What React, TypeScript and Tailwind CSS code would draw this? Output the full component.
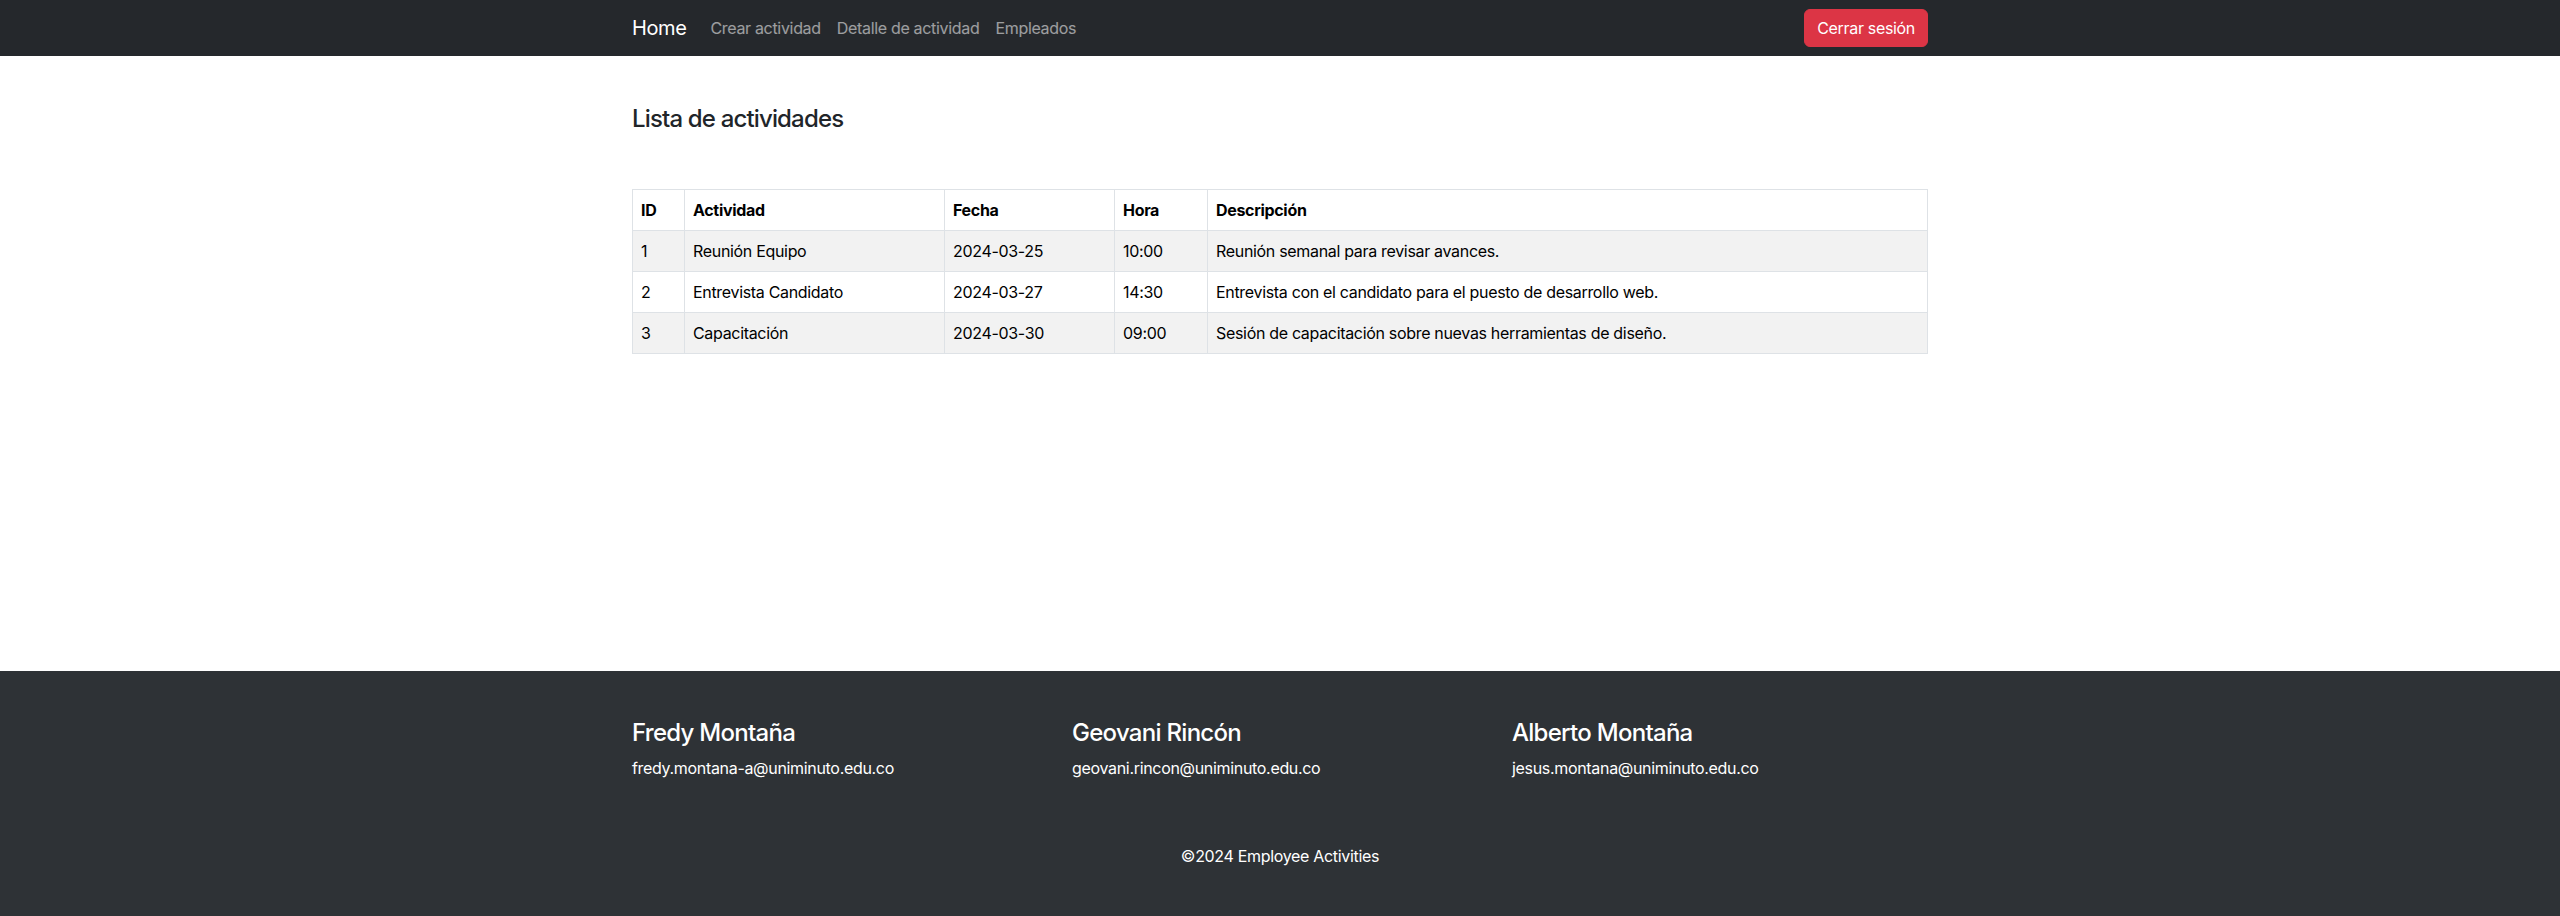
import * as React from 'react';

interface Activity {
  id: number;
  name: string;
  date: string;
  time: string;
  description: string;
}

const activities: Activity[] = [
  { id: 1, name: 'Reunión Equipo', date: '2024-03-25', time: '10:00', description: 'Reunión semanal para revisar avances.' },
  { id: 2, name: 'Entrevista Candidato', date: '2024-03-27', time: '14:30', description: 'Entrevista con el candidato para el puesto de desarrollo web.' },
  { id: 3, name: 'Capacitación', date: '2024-03-30', time: '09:00', description: 'Sesión de capacitación sobre nuevas herramientas de diseño.' },
];

const authors = [
  { name: 'Fredy Montaña', email: 'fredy.montana-a@uniminuto.edu.co' },
  { name: 'Geovani Rincón', email: 'geovani.rincon@uniminuto.edu.co' },
  { name: 'Alberto Montaña', email: 'jesus.montana@uniminuto.edu.co' },
];

function Navbar() {
  return (
    <nav className="bg-[#25282c] py-2">
      <div className="w-[1296px] mx-auto flex items-center justify-between">
        <div className="flex items-center">
          <a href="#" className="text-[20px] leading-[30px] py-[5px] mr-4 text-white tracking-[-0.02em]">
            Home
          </a>
          <ul className="flex items-center">
            {['Crear actividad', 'Detalle de actividad', 'Empleados'].map((l) => (
              <li key={l}>
                <a href="#" className="block px-2 py-2 text-base leading-6 text-white/55">
                  {l}
                </a>
              </li>
            ))}
          </ul>
        </div>
        <button className="bg-[#dc3545] border border-[#dc3545] text-white text-base leading-6 px-3 py-[6px] rounded-[6px]">
          Cerrar sesión
        </button>
      </div>
    </nav>
  );
}

function ActivityTable() {
  const cell = 'border border-[#dee2e6] p-2 text-left align-top';
  return (
    <table className="w-full table-fixed border-collapse text-black text-base leading-6 mb-4">
      <colgroup>
        <col className="w-[52px]" />
        <col className="w-[260px]" />
        <col className="w-[170px]" />
        <col className="w-[93px]" />
        <col />
      </colgroup>
      <thead>
        <tr>
          <th className={`${cell} font-bold`}>ID</th>
          <th className={`${cell} font-bold`}>Actividad</th>
          <th className={`${cell} font-bold`}>Fecha</th>
          <th className={`${cell} font-bold`}>Hora</th>
          <th className={`${cell} font-bold`}>Descripción</th>
        </tr>
      </thead>
      <tbody>
        {activities.map((a, i) => (
          <tr key={a.id} className={i % 2 === 0 ? 'bg-[#f2f2f2]' : 'bg-white'}>
            <td className={cell}>{a.id}</td>
            <td className={cell}>{a.name}</td>
            <td className={cell}>{a.date}</td>
            <td className={cell}>{a.time}</td>
            <td className={cell}>{a.description}</td>
          </tr>
        ))}
      </tbody>
    </table>
  );
}

function Footer() {
  return (
    <footer className="bg-[#2e3236] text-white py-12">
      <div className="w-[1296px] mx-auto">
        <div className="grid grid-cols-3 gap-6">
          {authors.map((a) => (
            <div key={a.email}>
              <h4 className="text-2xl leading-[28.8px] font-medium mb-2 tracking-[-0.03em]">{a.name}</h4>
              <p className="text-base leading-6 mb-4">{a.email}</p>
            </div>
          ))}
        </div>
        <p className="text-center text-base leading-6 mt-12">©2024 Employee Activities</p>
      </div>
    </footer>
  );
}

export default function App() {
  return (
    <div
      className="min-h-screen flex flex-col bg-white text-[#212529] tracking-[-0.02em]"
      style={{ fontFamily: 'Inter, "Noto Sans", sans-serif' }}
    >
      <Navbar />
      <main className="flex-1">
        <div className="w-[1296px] mx-auto pt-[49px]">
          <h4 className="text-2xl leading-[28.8px] font-medium tracking-[-0.035em]">Lista de actividades</h4>
          <div className="mt-[55px]">
            <ActivityTable />
          </div>
        </div>
      </main>
      <Footer />
    </div>
  );
}
